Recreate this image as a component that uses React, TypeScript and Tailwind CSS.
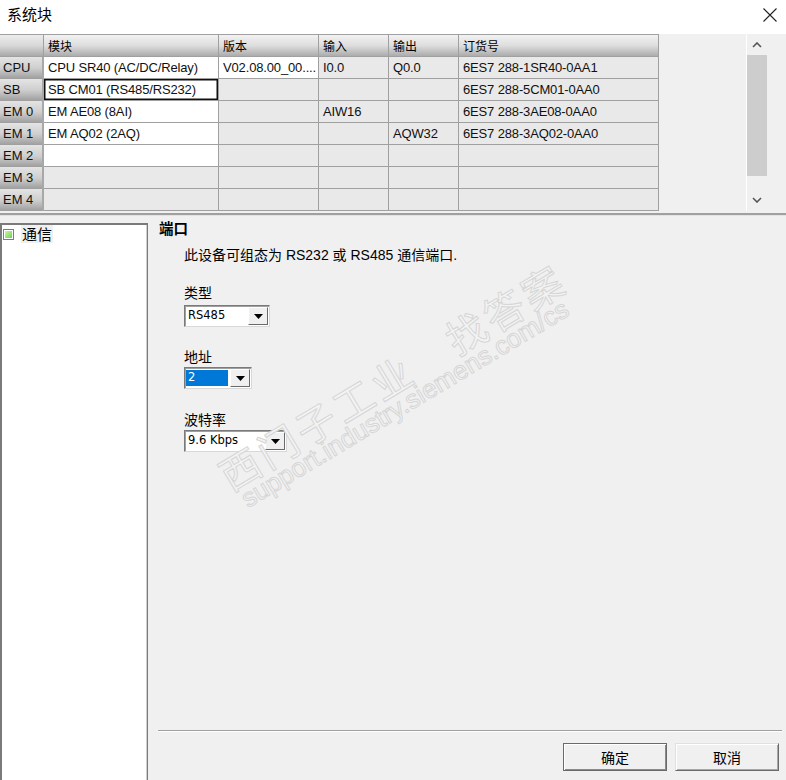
import React from "react";

const cjk = "font-['Noto_Sans_CJK_SC',sans-serif]";
const cell = "font-['Liberation_Sans','Noto_Sans_CJK_SC',sans-serif]";
const ctl = "font-['DejaVu_Sans','Noto_Sans_CJK_SC',sans-serif]";

type Cell = { t?: string; white?: boolean; focus?: boolean };
type Row = { h: string; cells: Cell[] };

const rows: Row[] = [
  {
    h: "CPU",
    cells: [
      { t: "CPU SR40 (AC/DC/Relay)", white: true },
      { t: "V02.08.00_00....", white: true },
      { t: "I0.0" },
      { t: "Q0.0" },
      { t: "6ES7 288-1SR40-0AA1" },
    ],
  },
  {
    h: "SB",
    cells: [{ t: "SB CM01 (RS485/RS232)", white: true, focus: true }, {}, {}, {}, { t: "6ES7 288-5CM01-0AA0" }],
  },
  {
    h: "EM 0",
    cells: [{ t: "EM AE08 (8AI)", white: true }, {}, { t: "AIW16" }, {}, { t: "6ES7 288-3AE08-0AA0" }],
  },
  {
    h: "EM 1",
    cells: [{ t: "EM AQ02 (2AQ)", white: true }, {}, {}, { t: "AQW32" }, { t: "6ES7 288-3AQ02-0AA0" }],
  },
  { h: "EM 2", cells: [{ white: true }, {}, {}, {}, {}] },
  { h: "EM 3", cells: [{}, {}, {}, {}, {}] },
  { h: "EM 4", cells: [{}, {}, {}, {}, {}] },
];

const headers = ["模块", "版本", "输入", "输出", "订货号"];

function Arrow() {
  return (
    <svg width="9" height="5" viewBox="0 0 9 5">
      <polygon points="0,0 9,0 4.5,5" fill="#000" />
    </svg>
  );
}

function Combo({ width, value, selected }: { width: string; value: string; selected?: boolean }) {
  return (
    <div
      className={`flex h-[22px] ${width} border border-t-[#7a7a7a] border-l-[#7a7a7a] border-r-[#d8d8d8] border-b-[#d8d8d8] bg-white shadow-[inset_1px_1px_0_#a0a0a0]`}
    >
      <div className="flex flex-1 items-center pl-px pr-[2px] py-[2px]">
        <span
          className={`flex h-full w-full items-center pl-[2px] text-[11.5px] ${ctl} ${
            selected ? "bg-[#0078d7] text-white" : "text-black"
          }`}
        >
          {value}
        </span>
      </div>
      <div className="mt-[1px] mb-[1px] mr-[1px] flex w-[20px] items-center justify-center bg-[#f0f0f0] border-t border-l border-t-white border-l-white border-r border-b border-r-[#6a6a6a] border-b-[#6a6a6a]">
        <Arrow />
      </div>
    </div>
  );
}

export default function App() {
  return (
    <div className="relative flex h-[780px] w-[786px] flex-col overflow-hidden bg-[#f0f0f0] text-black">
      {/* title bar */}
      <div className="flex h-[34px] items-center justify-between bg-white pl-[7px] pr-[8px]">
        <span className={`text-[15px] ${cjk} pb-[5px]`}>系统块</span>
        <svg width="16" height="16" viewBox="0 0 16 16" className="mb-[4px]">
          <path d="M1.5 1.5 L14.5 14.5 M14.5 1.5 L1.5 14.5" stroke="#222" strokeWidth="1.1" />
        </svg>
      </div>

      {/* module table */}
      <div className="flex h-[177px]">
        <div className="grid h-full w-[659px] grid-cols-[44px_175px_100px_70px_70px_200px] grid-rows-[22px_repeat(7,22px)] content-start border-t border-[#a0a0a0]">
          <div className="border-b border-r border-[#a0a0a0] bg-gradient-to-b from-[#ececec] via-[#d8d8d8] to-[#a9a9a9]" />
          {headers.map((h) => (
            <div
              key={h}
              className={`flex items-center border-b border-r border-[#a0a0a0] bg-gradient-to-b from-[#f2f2f2] via-[#dedede] to-[#acacac] pl-[4px] text-[12px] ${cjk}`}
            >
              {h}
            </div>
          ))}
          {rows.map((r) => (
            <React.Fragment key={r.h}>
              <div
                className={`flex items-center bg-gradient-to-b from-[#e4e4e4] via-[#cfcfcf] to-[#9d9d9d] pl-[3px] text-[13px] text-[#111] ${cell} shadow-[inset_-2px_0_0_#a8a8a8]`}
              >
                {r.h}
              </div>
              {r.cells.map((c, i) => (
                <div
                  key={i}
                  className={`flex items-center overflow-hidden whitespace-nowrap border-b border-r border-[#a0a0a0] pl-[4px] text-[13px] tracking-[-0.15px] text-[#111] ${cell} ${
                    c.white ? "bg-white" : "bg-[#e9e9e9]"
                  } ${c.focus ? "shadow-[inset_0_0_0_1.5px_#111]" : ""}`}
                >
                  {c.t}
                </div>
              ))}
            </React.Fragment>
          ))}
        </div>
        <div className="flex-1" />
        {/* scrollbar */}
        <div className="flex w-[21px] flex-col border-l border-white">
          <div className="flex h-[21px] items-center justify-center">
            <svg width="10" height="6" viewBox="0 0 10 6">
              <polyline points="1,5 5,1 9,5" fill="none" stroke="#555" strokeWidth="1.6" />
            </svg>
          </div>
          <div className="h-[121px] bg-[#cdcdcd]" />
          <div className="flex-1" />
          <div className="flex h-[22px] items-center justify-center">
            <svg width="10" height="6" viewBox="0 0 10 6">
              <polyline points="1,1 5,5 9,1" fill="none" stroke="#555" strokeWidth="1.6" />
            </svg>
          </div>
        </div>
        <div className="w-[19px]" />
      </div>

      {/* splitter */}
      <div className="mt-[2px] h-[2px] bg-[#a0a0a0]" />
      <div className="h-px bg-[#e2e2e2]" />

      {/* bottom section */}
      <div className="relative flex flex-1">
        {/* tree */}
        <div className="mt-[7px] w-[148px] border-l-2 border-t-2 border-r border-[#7a7a7a] bg-white shadow-[inset_-1px_0_0_#d0d0d0]">
          <div className="flex items-center pl-[1px]">
            <div className="h-[11px] w-[11px] border border-[#7b7b7b] bg-white p-px">
              <div className="h-full w-full bg-gradient-to-br from-[#c6f5a8] to-[#6fd14a]" />
            </div>
            <span className={`ml-[7px] bg-[#f0f0f0] px-[1px] text-[15px] leading-[18px] ${cjk}`}>通信</span>
          </div>
        </div>

        {/* settings */}
        <div className="flex flex-1 flex-col">
          <div className="pl-[11px] pt-[2px]">
            <div className={`h-[20px] text-[14.5px] font-bold leading-[20px] ${cjk}`}>端口</div>
            <div className="pl-[25px]">
              <div className={`mt-[7px] h-[20px] whitespace-nowrap text-[14px] leading-[20px] ${cell}`}>
                此设备可组态为 RS232 或 RS485 通信端口.
              </div>
              <div className={`mt-[17px] h-[20px] text-[14px] leading-[20px] ${cjk}`}>类型</div>
              <div className="mt-[3px]">
                <Combo width="w-[86px]" value="RS485" />
              </div>
              <div className={`mt-[19px] h-[20px] text-[14px] leading-[20px] ${cjk}`}>地址</div>
              <div className="mt-[1px]">
                <Combo width="w-[68px]" value="2" selected />
              </div>
              <div className={`mt-[20px] h-[20px] text-[14px] leading-[20px] ${cjk}`}>波特率</div>
              <div className="mt-[1px]">
                <Combo width="w-[103px]" value="9.6 Kbps" />
              </div>
            </div>
          </div>
          <div className="flex-1" />
          <div className="ml-[10px] mr-[4px] h-px bg-[#a0a0a0]" />
          <div className="h-px bg-white ml-[10px] mr-[4px]" />
          <div className="mt-[11px] mb-[9px] mr-[7px] flex justify-end gap-[8px]">
            <button
              className={`h-[28px] w-[104px] border border-[#6a6a6a] bg-[#f0f0f0] text-[14px] ${cjk} shadow-[inset_1px_1px_0_#fff,inset_-1px_-1px_0_#8a8a8a]`}
            >
              确定
            </button>
            <button
              className={`h-[28px] w-[104px] border border-t-[#e0e0e0] border-l-[#e0e0e0] border-r-[#6a6a6a] border-b-[#6a6a6a] bg-[#f0f0f0] text-[14px] ${cjk} shadow-[inset_1px_1px_0_#fff,inset_-1px_-1px_0_#a8a8a8]`}
            >
              取消
            </button>
          </div>
        </div>

        {/* watermark */}
        <div className="pointer-events-none absolute left-[392px] top-[160px] -translate-x-1/2 -translate-y-1/2 -rotate-[31deg] whitespace-nowrap">
          <span
            className={`text-[40px] tracking-[4px] text-[#f3f3f3] [-webkit-text-stroke:1px_#d6d6d6] ${cjk}`}
          >
            西门子工业　找答案
          </span>
        </div>
        <div className="pointer-events-none absolute left-[405px] top-[188px] -translate-x-1/2 -translate-y-1/2 -rotate-[31deg] whitespace-nowrap">
          <span
            className={`text-[26px] text-[#f3f3f3] [-webkit-text-stroke:1px_#d6d6d6] ${cell}`}
          >
            support.industry.siemens.com/cs
          </span>
        </div>
      </div>
    </div>
  );
}
